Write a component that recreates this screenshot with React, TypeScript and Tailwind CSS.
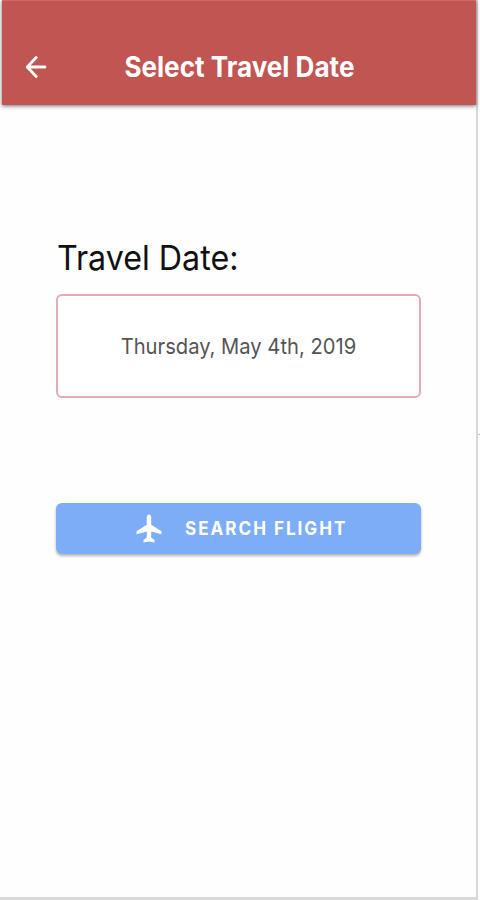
import type { ReactNode } from "react";

function BackIcon() {
  return (
    <svg
      viewBox="0 0 22 24"
      className="h-6 w-[22px]"
      fill="none"
      stroke="currentColor"
      strokeWidth={2.8}
      strokeLinecap="round"
      strokeLinejoin="round"
    >
      <path d="M20 12H2.5M11.2 2.5L2.2 12l9 9.5" />
    </svg>
  );
}

function PlaneIcon() {
  return (
    <svg viewBox="0 0 26 29" className="h-[29px] w-[26px]" fill="currentColor">
      <path d="M13 .5c-1.300 0-2.200 1.100-2.200 2.800v7.500L.5 17.200v3l10.300-2.700v6L7.500 26v2.500l5.500-1.100 5.500 1.100V26l-3.300-2.500v-6l10.300 2.700v-3l-10.300-6.400V3.300C15.200 1.600 14.300.5 13 .5z" />
    </svg>
  );
}

function Header({ children }: { children: ReactNode }) {
  return (
    <header className="relative flex h-[105px] items-end border-t border-[#d96568] bg-[#c15552] pb-[20px] text-white shadow-[0_1px_4px_rgba(0,0,0,0.55)]">
      <button className="absolute bottom-[26px] left-[23px]" aria-label="Back">
        <BackIcon />
      </button>
      <h1 className="w-full text-center text-[28px] leading-9 font-bold whitespace-nowrap">
        {children}
      </h1>
    </header>
  );
}

export default function App() {
  const date = "Thursday, May 4th, 2019";

  return (
    <div className="flex h-[900px] w-[480px] bg-[#fdfdfd] font-['Inter',sans-serif]">
      <div className="flex h-[900px] w-[478px] flex-col border-r-2 border-b-[3px] border-[#d8d8d8] bg-[#fefefe] pl-[2px]">
        <Header>
          <span className="inline-block origin-center scale-x-[0.932]">Select Travel Date</span>
        </Header>

        <main className="flex flex-col pr-[55px] pl-[54px]">
          <label className="mt-[132px] h-[42px] origin-left scale-x-[0.948] pl-[1px] text-[34px] leading-[42px] whitespace-nowrap text-[#111]">
            Travel Date:
          </label>
          <button className="mt-[15px] flex h-[104px] items-center justify-center rounded-md border-2 border-[#e5abb5] bg-white text-[22px] whitespace-nowrap text-[#555]">
            <span className="inline-block scale-x-[0.917]">{date}</span>
          </button>

          <button className="mt-[105px] flex h-[51px] items-center rounded-md bg-[#7eadf7] pl-[80px] text-white shadow-[0_2px_3px_rgba(0,0,0,0.3)]">
            <PlaneIcon />
            <span className="mt-[2px] ml-[23px] inline-block origin-left scale-x-[0.9] text-[19px] font-bold tracking-[2.2px] whitespace-nowrap">
              SEARCH FLIGHT
            </span>
          </button>
        </main>
      </div>
      <div className="mt-[434px] h-px w-[2px] bg-[#c4c4c4]" />
    </div>
  );
}
